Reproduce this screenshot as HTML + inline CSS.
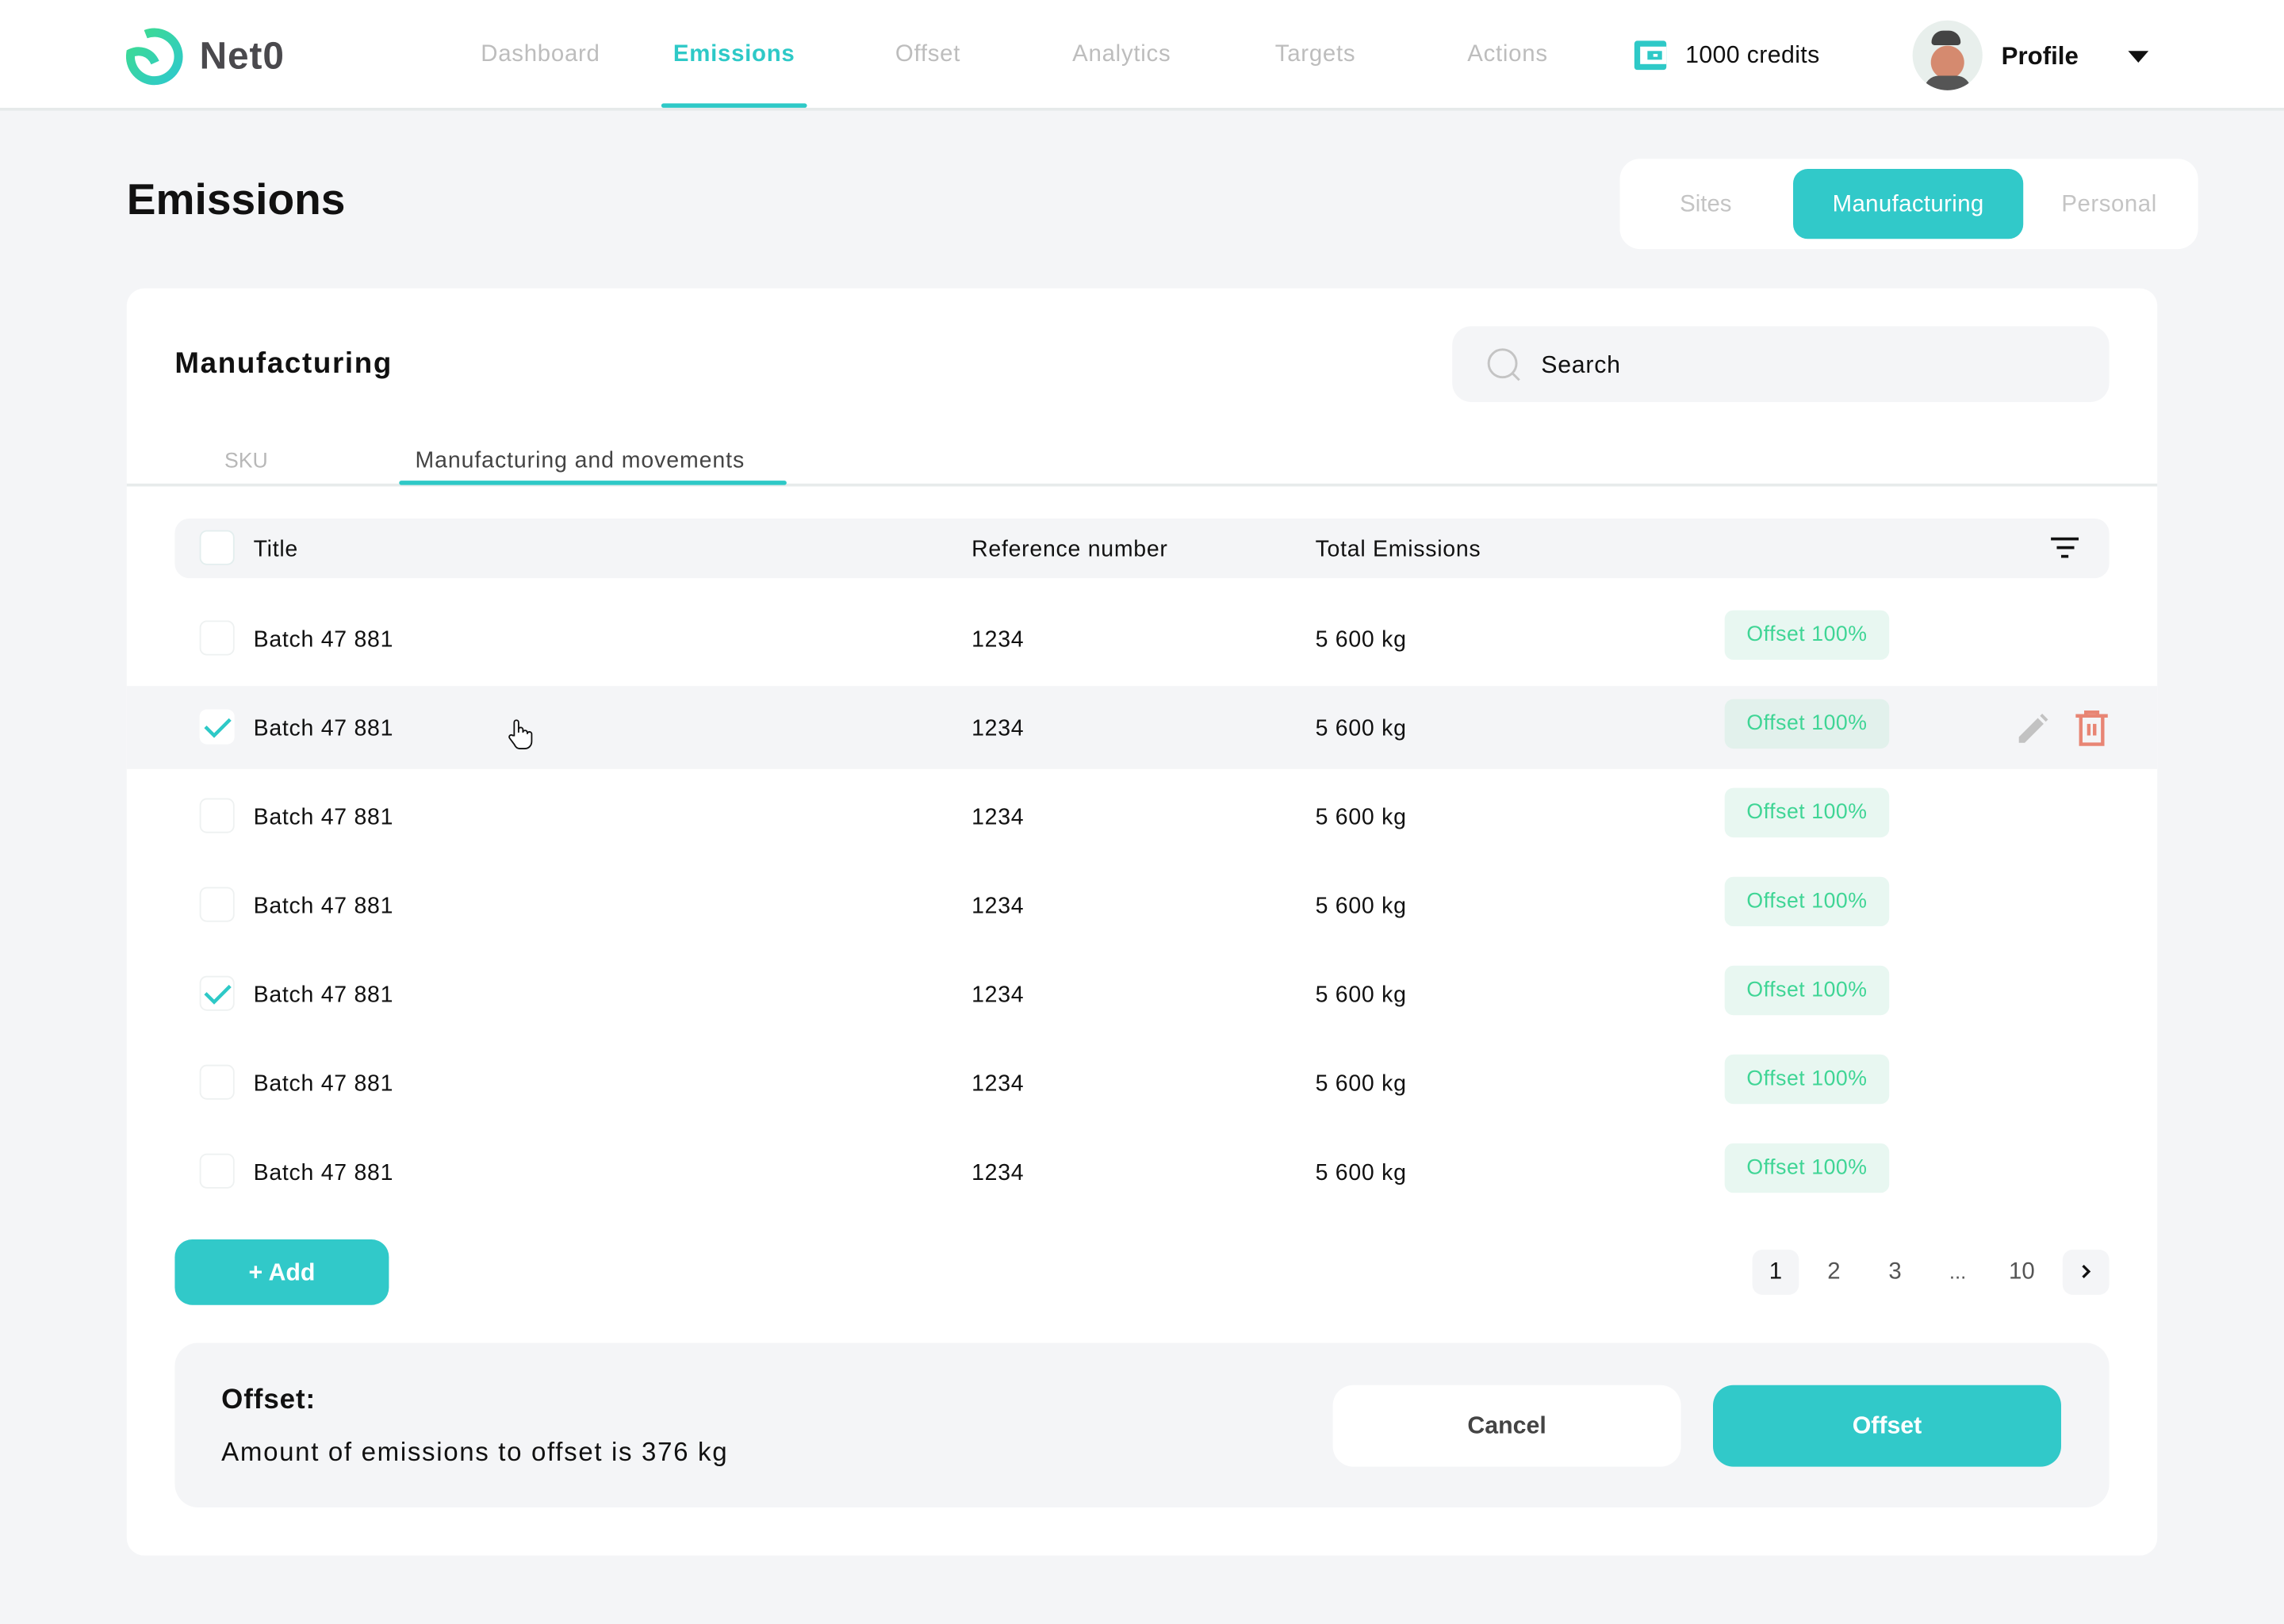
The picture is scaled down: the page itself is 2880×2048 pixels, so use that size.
<!DOCTYPE html>
<html><head><meta charset="utf-8"><style>
html,body{margin:0;padding:0;width:2880px;height:2048px;overflow:hidden;background:#f4f5f7;}
#w{position:absolute;left:0;top:0;width:1568px;height:1115px;transform:scale(1.836735);transform-origin:0 0;font-family:"Liberation Sans",sans-serif;color:#111;}
.a{position:absolute;}
.t{position:absolute;white-space:nowrap;line-height:1;}
.nav{position:absolute;top:29px;font-size:16px;color:#bdbdbd;transform:translateX(-50%);white-space:nowrap;letter-spacing:0.4px}
.cb{position:absolute;width:24px;height:24px;border:1px solid #eef1f1;border-radius:5px;background:#fff;box-sizing:border-box}
.badge{position:absolute;left:1184px;width:113px;height:34px;border-radius:6px;background:#e8f7f1;color:#3fd595;font-size:14.5px;line-height:35px;text-align:center;letter-spacing:0.3px}
.cell{position:absolute;font-size:15.5px;line-height:1;white-space:nowrap;letter-spacing:0.4px;margin-top:1px}
</style></head><body><div id="w">
<div class="a" style="left:0;top:0;width:1568px;height:74px;background:#fff;border-bottom:2px solid #e6eaea"></div>
<svg class="a" style="left:86px;top:19px" width="40" height="40" viewBox="0 0 40 40">
<defs><linearGradient id="g" x1="0" y1="0" x2="1" y2="1"><stop offset="0" stop-color="#3edc8f"/><stop offset="1" stop-color="#2ec9cc"/></linearGradient></defs>
<path d="M14 4.5 A16.5 16.5 0 1 1 3.7 17.5 C9 15 17 16 20.5 24" fill="none" stroke="url(#g)" stroke-width="6"/>
</svg>
<div class="t" style="left:137px;top:25px;font-size:26px;font-weight:bold;color:#4a494d;letter-spacing:0.5px">Net0</div>
<div class="nav" style="left:371px">Dashboard</div>
<div class="nav" style="left:504px;color:#2ec9c7;font-weight:bold">Emissions</div>
<div class="a" style="left:454px;top:71px;width:100px;height:3px;background:#2ec9c7;border-radius:2px"></div>
<div class="nav" style="left:637px">Offset</div>
<div class="nav" style="left:770px">Analytics</div>
<div class="nav" style="left:903px">Targets</div>
<div class="nav" style="left:1035px">Actions</div>
<div class="a" style="left:1122px;top:28px;width:22px;height:20px;background:#2ec9c7;border-radius:2px"></div>
<div class="a" style="left:1126px;top:32px;width:18px;height:12px;background:#fff"></div>
<div class="a" style="left:1131px;top:35px;width:10px;height:6px;background:#2ec9c7"></div>
<div class="a" style="left:1135px;top:37px;width:3px;height:2px;background:#fff"></div>
<div class="t" style="left:1157px;top:30px;font-size:16.5px;letter-spacing:0.2px">1000 credits</div>
<div class="a" style="left:1313px;top:14px;width:48px;height:48px;border-radius:50%;background:radial-gradient(circle at 50% 60%,#d58a6f 0 30%,#e8efec 31%);overflow:hidden">
 <div class="a" style="left:13px;top:7px;width:20px;height:10px;background:#444;border-radius:8px 8px 2px 2px"></div>
 <div class="a" style="left:8px;top:38px;width:32px;height:14px;background:#555;border-radius:10px 10px 0 0"></div>
</div>
<div class="t" style="left:1374px;top:30px;font-size:17px;font-weight:bold">Profile</div>
<div class="a" style="left:1461px;top:35px;width:0;height:0;border-left:7px solid transparent;border-right:7px solid transparent;border-top:8px solid #111"></div>

<div class="t" style="left:87px;top:123px;font-size:30px;font-weight:bold">Emissions</div>
<div class="a" style="left:1112px;top:109px;width:397px;height:62px;background:#fff;border-radius:14px"></div>
<div class="a" style="left:1231px;top:116px;width:158px;height:48px;background:#31c9c9;border-radius:10px"></div>
<div class="t" style="left:1171px;top:133px;font-size:16px;color:#c4c4c4;transform:translateX(-50%)">Sites</div>
<div class="t" style="left:1310px;top:133px;font-size:16px;color:#fff;transform:translateX(-50%);letter-spacing:0.2px">Manufacturing</div>
<div class="t" style="left:1448px;top:133px;font-size:16px;color:#c4c4c4;transform:translateX(-50%);letter-spacing:0.3px">Personal</div>

<div class="a" style="left:87px;top:198px;width:1394px;height:870px;background:#fff;border-radius:12px"></div>
<div class="t" style="left:120px;top:240px;font-size:20px;font-weight:bold;letter-spacing:0.9px">Manufacturing</div>
<div class="a" style="left:997px;top:224px;width:451px;height:52px;background:#f4f5f7;border-radius:13px"></div>
<svg class="a" style="left:1020px;top:238px" width="26" height="26" viewBox="0 0 26 26"><circle cx="11.5" cy="11.5" r="9.5" fill="none" stroke="#c4c4c4" stroke-width="1.6"/><path d="M18 18 L23 23" stroke="#c4c4c4" stroke-width="1.6"/></svg>
<div class="t" style="left:1058px;top:243px;font-size:16.5px;letter-spacing:0.4px">Search</div>
<div class="t" style="left:169px;top:310px;font-size:14.5px;color:#b8b8b8;transform:translateX(-50%)">SKU</div>
<div class="t" style="left:285px;top:309px;font-size:15.5px;color:#444;letter-spacing:0.5px">Manufacturing and movements</div>
<div class="a" style="left:87px;top:332px;width:1394px;height:2px;background:#e7ebeb"></div>
<div class="a" style="left:274px;top:330px;width:266px;height:3px;background:#2ec9c7;border-radius:2px"></div>

<div class="a" style="left:120px;top:356px;width:1328px;height:41px;background:#f4f5f7;border-radius:10px"></div>
<div class="cb" style="left:137px;top:364px;border-color:#e3eeee"></div>
<div class="cell" style="left:174px;top:369px">Title</div>
<div class="cell" style="left:667px;top:369px">Reference number</div>
<div class="cell" style="left:903px;top:369px">Total Emissions</div>
<div class="a" style="left:1408px;top:369px;width:19px;height:2px;background:#111"></div>
<div class="a" style="left:1412px;top:375px;width:12px;height:2px;background:#111"></div>
<div class="a" style="left:1415px;top:381px;width:5px;height:2px;background:#111"></div>

<div class="a" style="left:87px;top:471px;width:1394px;height:57px;background:#f4f5f7"></div>

<div class="cb" style="left:137px;top:426px"></div><div class="cell" style="left:174px;top:431px">Batch 47 881</div><div class="cell" style="left:667px;top:431px">1234</div><div class="cell" style="left:903px;top:431px">5 600 kg</div><div class="badge" style="top:419px">Offset 100%</div>

<div class="cb" style="left:137px;top:487px;border:none"></div><svg class="a" style="left:139px;top:489px" width="22" height="20"><path d="M2 10 L8 16 L19 5" fill="none" stroke="#2ec9c7" stroke-width="2.4"/></svg>
<div class="cell" style="left:174px;top:492px">Batch 47 881</div><div class="cell" style="left:667px;top:492px">1234</div><div class="cell" style="left:903px;top:492px">5 600 kg</div><div class="badge" style="top:480px;background:#e2f1ec">Offset 100%</div>
<svg class="a" style="left:348px;top:493px" width="18" height="22" viewBox="0 0 18 22"><path d="M5 12 V3 a1.5 1.5 0 0 1 3 0 V10 V8 a1.5 1.5 0 0 1 3 0 V10 a1.5 1.5 0 0 1 3 0 V11 a1.5 1.5 0 0 1 3 0 V16 c0 3-2 5-5 5 H9 c-2 0-3-1-4-3 L2 14 a1.4 1.4 0 0 1 2-2 Z" fill="#fff" stroke="#111" stroke-width="1"/></svg>
<svg class="a" style="left:1384px;top:488px" width="24" height="24" viewBox="0 0 24 24"><path d="M2 22 V18 L15 5 L19 9 L6 22 Z M16.5 3.5 L18 2 L22 6 L20.5 7.5 Z" fill="#c2c2c2"/></svg>
<svg class="a" style="left:1424px;top:487px" width="24" height="26" viewBox="0 0 24 26"><path d="M1 4.5 H23 M8 4.5 V2 H16 V4.5 M4.5 5 V24 H19.5 V5 M10 10 V18 M14 10 V18" fill="none" stroke="#e88574" stroke-width="2.4"/></svg>

<div class="cb" style="left:137px;top:548px"></div><div class="cell" style="left:174px;top:553px">Batch 47 881</div><div class="cell" style="left:667px;top:553px">1234</div><div class="cell" style="left:903px;top:553px">5 600 kg</div><div class="badge" style="top:541px">Offset 100%</div>
<div class="cb" style="left:137px;top:609px"></div><div class="cell" style="left:174px;top:614px">Batch 47 881</div><div class="cell" style="left:667px;top:614px">1234</div><div class="cell" style="left:903px;top:614px">5 600 kg</div><div class="badge" style="top:602px">Offset 100%</div>
<div class="cb" style="left:137px;top:670px"></div><svg class="a" style="left:139px;top:672px" width="22" height="20"><path d="M2 10 L8 16 L19 5" fill="none" stroke="#2ec9c7" stroke-width="2.4"/></svg>
<div class="cell" style="left:174px;top:675px">Batch 47 881</div><div class="cell" style="left:667px;top:675px">1234</div><div class="cell" style="left:903px;top:675px">5 600 kg</div><div class="badge" style="top:663px">Offset 100%</div>
<div class="cb" style="left:137px;top:731px"></div><div class="cell" style="left:174px;top:736px">Batch 47 881</div><div class="cell" style="left:667px;top:736px">1234</div><div class="cell" style="left:903px;top:736px">5 600 kg</div><div class="badge" style="top:724px">Offset 100%</div>
<div class="cb" style="left:137px;top:792px"></div><div class="cell" style="left:174px;top:797px">Batch 47 881</div><div class="cell" style="left:667px;top:797px">1234</div><div class="cell" style="left:903px;top:797px">5 600 kg</div><div class="badge" style="top:785px">Offset 100%</div>

<div class="a" style="left:120px;top:851px;width:147px;height:45px;background:#31c9c9;border-radius:12px;color:#fff;font-size:16.5px;font-weight:bold;line-height:46px;text-align:center">+ Add</div>
<div class="a" style="left:1203px;top:858px;width:32px;height:31px;background:#f4f5f7;border-radius:7px"></div>
<div class="t" style="left:1219px;top:866px;font-size:16px;transform:translateX(-50%)">1</div>
<div class="t" style="left:1259px;top:866px;font-size:16px;color:#555;transform:translateX(-50%)">2</div>
<div class="t" style="left:1301px;top:866px;font-size:16px;color:#555;transform:translateX(-50%)">3</div>
<div class="t" style="left:1344px;top:866px;font-size:14px;color:#555;transform:translateX(-50%)">...</div>
<div class="t" style="left:1388px;top:866px;font-size:16px;color:#555;transform:translateX(-50%)">10</div>
<div class="a" style="left:1416px;top:858px;width:32px;height:31px;background:#f4f5f7;border-radius:7px"></div>
<svg class="a" style="left:1426px;top:867px" width="12" height="12"><path d="M4 2 L8 6 L4 10" fill="none" stroke="#111" stroke-width="1.8"/></svg>

<div class="a" style="left:120px;top:922px;width:1328px;height:113px;background:#f4f5f7;border-radius:16px"></div>
<div class="t" style="left:152px;top:952px;font-size:19px;font-weight:bold;letter-spacing:0.5px">Offset:</div>
<div class="t" style="left:152px;top:988px;font-size:18px;letter-spacing:0.9px">Amount of emissions to offset is 376 kg</div>
<div class="a" style="left:915px;top:951px;width:239px;height:56px;background:#fff;border-radius:14px;font-size:16.5px;font-weight:bold;color:#444;text-align:center;line-height:57px">Cancel</div>
<div class="a" style="left:1176px;top:951px;width:239px;height:56px;background:#31c9c9;border-radius:14px;font-size:16.5px;font-weight:bold;color:#fff;text-align:center;line-height:57px">Offset</div>
</div></body></html>
